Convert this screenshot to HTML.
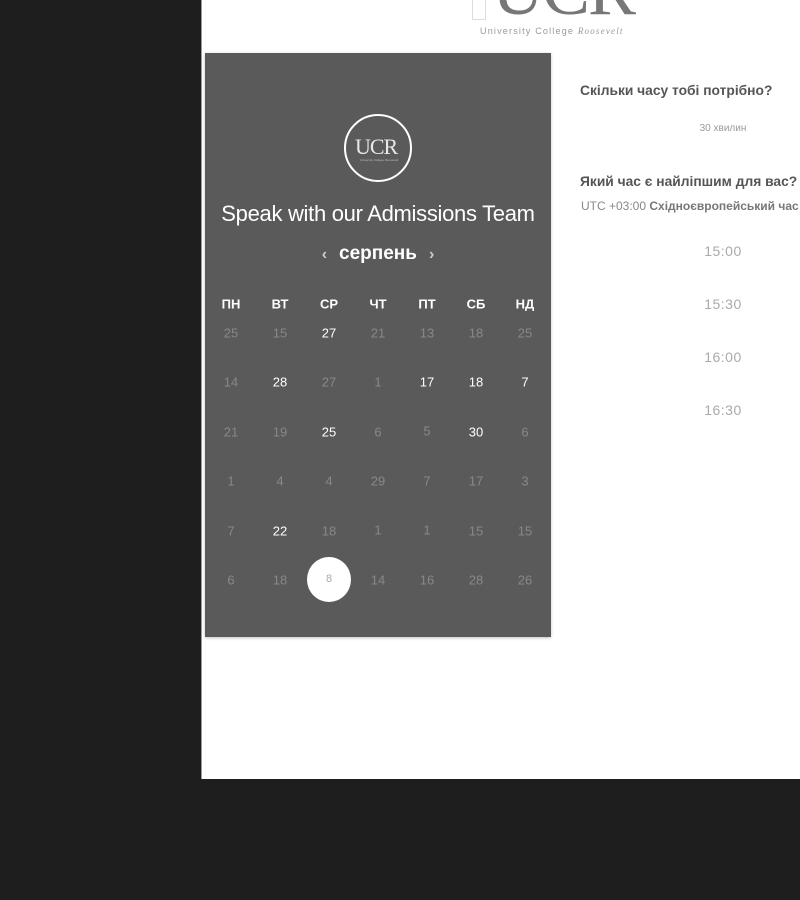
<!DOCTYPE html>
<html><head><meta charset="utf-8"><style>
*{margin:0;padding:0;box-sizing:border-box}
body{width:800px;height:900px;background:#1e1e1e;position:relative;overflow:hidden;font-family:"Liberation Sans",sans-serif}
#panel{position:absolute;left:201px;top:0;width:599px;height:779px;background:#fff;border-left:1px solid #999}
#cal{position:absolute;left:205px;top:53px;width:346px;height:584px;background:#5a5a5a;box-shadow:0 1px 3px rgba(0,0,0,.25)}
.abs{position:absolute}
.d{position:absolute;width:40px;text-align:center;font-size:13px;color:#888;transform:translate(-50%,-50%)}
.w{color:#fff}
.h{position:absolute;width:40px;text-align:center;font-size:13px;font-weight:bold;color:#fff;transform:translate(-50%,-50%)}
.t{position:absolute;left:680px;width:86px;text-align:center;font-size:14px;color:#aaa;letter-spacing:.5px}
</style></head><body>
<div id="panel"></div>
<div class="abs" style="left:472px;top:-22px;width:14px;height:42px;border:1px solid #ddd;border-top:none"></div>
<div class="abs" style="left:492px;top:-40px;font-family:'Liberation Serif',serif;font-size:72px;color:#777;letter-spacing:-2px;line-height:60px">UCR</div>
<div class="abs" style="left:480px;top:26px;font-size:9px;color:#999;letter-spacing:1.2px;white-space:nowrap">University College <i style="font-family:'Liberation Serif',serif">Roosevelt</i></div>
<div id="cal"></div>
<div class="abs" style="left:344px;top:114px;width:68px;height:68px;border:2px solid #fff;border-radius:50%"></div>
<div class="abs" style="left:355px;top:134px;font-family:'Liberation Serif',serif;font-size:22px;color:#e8e8e8;letter-spacing:-1px">UCR</div>
<div class="abs" style="left:355px;top:158px;width:48px;font-size:3px;color:#bbb;text-align:center">University College Roosevelt</div>
<div class="abs" style="left:205px;top:201px;width:346px;text-align:center;font-size:22px;color:#fff;letter-spacing:-.3px">Speak with our Admissions Team</div>
<div class="abs" style="left:205px;top:243px;width:346px;text-align:center;font-size:19px;color:#fff;font-weight:bold"><span style="font-size:16px;color:#ccc;margin-right:12px">‹</span>серпень<span style="font-size:16px;color:#ccc;margin-left:12px">›</span></div>
<div class="h" style="left:231px;top:304px">ПН</div><div class="h" style="left:280px;top:304px">ВТ</div><div class="h" style="left:329px;top:304px">СР</div><div class="h" style="left:378px;top:304px">ЧТ</div><div class="h" style="left:427px;top:304px">ПТ</div><div class="h" style="left:476px;top:304px">СБ</div><div class="h" style="left:525px;top:304px">НД</div>
<div class="abs" style="left:307px;top:557px;width:44px;height:45px;border-radius:50%;background:#fff"></div>
<div class="d" style="left:231px;top:333px">25</div><div class="d" style="left:280px;top:333px">15</div><div class="d w" style="left:329px;top:333px">27</div><div class="d" style="left:378px;top:333px">21</div><div class="d" style="left:427px;top:333px">13</div><div class="d" style="left:476px;top:333px">18</div><div class="d" style="left:525px;top:333px">25</div>
<div class="d" style="left:231px;top:382px">14</div><div class="d w" style="left:280px;top:382px">28</div><div class="d" style="left:329px;top:382px">27</div><div class="d" style="left:378px;top:382px">1</div><div class="d w" style="left:427px;top:382px">17</div><div class="d w" style="left:476px;top:382px">18</div><div class="d w" style="left:525px;top:382px">7</div>
<div class="d" style="left:231px;top:432px">21</div><div class="d" style="left:280px;top:432px">19</div><div class="d w" style="left:329px;top:432px">25</div><div class="d" style="left:378px;top:432px">6</div><div class="d" style="left:427px;top:431px">5</div><div class="d w" style="left:476px;top:432px">30</div><div class="d" style="left:525px;top:432px">6</div>
<div class="d" style="left:231px;top:481px">1</div><div class="d" style="left:280px;top:481px">4</div><div class="d" style="left:329px;top:481px">4</div><div class="d" style="left:378px;top:481px">29</div><div class="d" style="left:427px;top:481px">7</div><div class="d" style="left:476px;top:481px">17</div><div class="d" style="left:525px;top:481px">3</div>
<div class="d" style="left:231px;top:531px">7</div><div class="d w" style="left:280px;top:531px">22</div><div class="d" style="left:329px;top:531px">18</div><div class="d" style="left:378px;top:530px">1</div><div class="d" style="left:427px;top:530px">1</div><div class="d" style="left:476px;top:531px">15</div><div class="d" style="left:525px;top:531px">15</div>
<div class="d" style="left:231px;top:580px">6</div><div class="d" style="left:280px;top:580px">18</div><div class="d" style="left:329px;top:579px;color:#aaa;font-size:11px">8</div><div class="d" style="left:378px;top:580px">14</div><div class="d" style="left:427px;top:580px">16</div><div class="d" style="left:476px;top:580px">28</div><div class="d" style="left:525px;top:580px">26</div>
<div class="abs" style="left:580px;top:83px;font-size:13.8px;font-weight:bold;color:#555;white-space:nowrap">Скільки часу тобі потрібно?</div>
<div class="abs" style="left:680px;top:123px;width:86px;text-align:center;font-size:10px;color:#999">30 хвилин</div>
<div class="abs" style="left:580px;top:174px;font-size:13.8px;font-weight:bold;color:#555;white-space:nowrap">Який час є найліпшим для вас?</div>
<div class="abs" style="left:581px;top:199px;font-size:12px;color:#888;white-space:nowrap">UTC +03:00 <b style="color:#777">Східноєвропейський час</b></div>
<div class="t" style="top:243px">15:00</div>
<div class="t" style="top:296px">15:30</div>
<div class="t" style="top:349px">16:00</div>
<div class="t" style="top:402px">16:30</div>
</body></html>
